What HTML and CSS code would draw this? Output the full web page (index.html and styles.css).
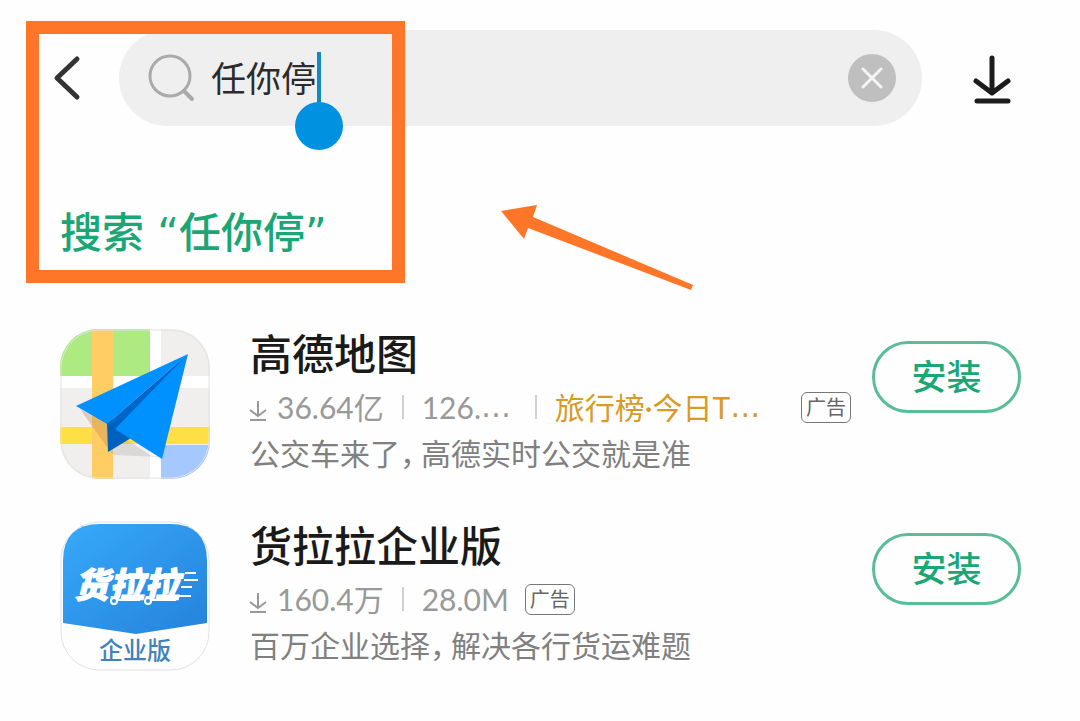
FILE: index.html
```
<!DOCTYPE html>
<html lang="zh-CN">

<head>
  <meta charset="UTF-8" />
  <meta name="viewport" content="width=device-width, initial-scale=1" />
  <title>任你停</title>
  <link rel="stylesheet" href="styles.css">
</head>

<body>
  <header class="top-bar">
    <button class="icon-btn" aria-label="返回">
      <svg width="28" height="46" viewBox="0 0 28 46">
        <path d="M24 4 L4 23 L24 42" fill="none" stroke="#333" stroke-width="5" stroke-linecap="round"
          stroke-linejoin="round" />
      </svg>
    </button>
    <form class="search-box">
      <svg class="search-icon" width="48" height="48" viewBox="0 0 48 48" fill="none" stroke="#aaa">
        <circle cx="23" cy="22" r="20" stroke-width="3" />
        <path d="M37 37 L45 45" stroke-width="4" stroke-linecap="round" />
      </svg>
      <div class="search-field">
        <input class="search-input" type="text" value="任你停" aria-label="搜索应用" />
        <span class="cursor"></span>
      </div>
      <button class="clear-btn" type="button" aria-label="清空">
        <svg width="48" height="48" viewBox="0 0 48 48">
          <circle cx="24" cy="24" r="24" fill="#bfbfbf" />
          <path d="M15 15 L33 33 M33 15 L15 33" stroke="#f5f5f5" stroke-width="3" stroke-linecap="round" />
        </svg>
      </button>
    </form>
    <button class="icon-btn" aria-label="下载管理">
      <svg width="40" height="56" viewBox="0 0 40 56" fill="none" stroke="#1c1c1c" stroke-width="5"
        stroke-linecap="round" stroke-linejoin="round">
        <path d="M20 8 V43 M4 31 L20 43 L36 31 M5 51 H36" />
      </svg>
    </button>
  </header>

  <main>
    <a class="suggestion" href="#">搜索 “任你停”</a>

    <ul class="app-list">
      <li class="app">
        <svg class="app-icon" viewBox="0 0 150 150">
          <defs>
            <clipPath id="map-clip">
              <rect width="150" height="150" rx="38" />
            </clipPath>
          </defs>
          <g clip-path="url(#map-clip)">
            <rect width="150" height="150" fill="#f0efed" />
            <rect width="90" height="48" fill="#aeea82" />
            <rect x="101" y="116" width="49" height="34" fill="#a5c8ff" />
            <rect x="90" width="11" height="150" fill="#fff" />
            <rect y="47" width="150" height="12" fill="#fff" />
            <rect y="98" width="150" height="17" fill="#ffdf45" />
            <rect x="32" width="21" height="150" fill="#ffcd64" />
            <path d="M20 80 L47 95 L49 121 Z" fill="#b98a50" opacity="0.35" />
            <path d="M49 122 L62 108 L90 126 L100 128 L54 126 Z" fill="#999" opacity="0.25" />
            <path d="M47 94 L48 123 L76 106 L90 70 Z" fill="#0060bd" />
            <path d="M128 25 L16 77 L47 95 Z" fill="#0091ff" />
            <path d="M128 25 L47 95 L48 98 L90 74 Z" fill="#0066ca" />
            <path d="M128 25 L55 100 L102 130 Z" fill="#0091ff" />
          </g>
          <rect class="icon-edge" x="1" y="1" width="148" height="148" rx="38" />
        </svg>
        <div class="app-info">
          <h2 class="app-name">高德地图</h2>
          <div class="app-meta">
            <svg class="down-icon" width="18" height="24" viewBox="0 0 18 24">
              <path d="M9 3 V18 M1 12 L9 18 L17 12 M1 22 H17" />
            </svg>
            <span class="downloads">36.64亿</span>
            <span class="size size-cut">126.<span class="dots">…</span></span>
            <span class="rank">旅行榜·今日T<span class="dots">…</span></span>
            <span class="ad">广告</span>
          </div>
          <p class="app-desc">公交车来了<span class="comma">，</span>高德实时公交就是准</p>
        </div>
        <button class="install-btn">安装</button>
      </li>

      <li class="app">
        <svg class="app-icon" viewBox="0 0 150 150">
          <defs>
            <linearGradient id="blue" x1="0" y1="0" x2="1" y2="1">
              <stop offset="0" stop-color="#36a9fb" />
              <stop offset="1" stop-color="#2582da" />
            </linearGradient>
          </defs>
          <rect class="icon-edge" x="1" y="1" width="148" height="148" rx="38" />
          <path d="M3 102 V40 Q3 3 40 3 H110 Q147 3 147 40 V102 L76 113 Z" fill="url(#blue)" />
          <text class="logo-text" x="14" y="77">货拉拉</text>
          <g fill="none" stroke="#fff" stroke-width="2">
            <path d="M58 79 H80 M92 79 H116 M125 52 H136 M124 59 H138 M121 66 H132 M119 75 H131" />
            <circle cx="54" cy="80" r="3" fill="#2c93ea" />
            <circle cx="88" cy="80" r="3" fill="#2c93ea" />
          </g>
          <text class="logo-sub" x="75" y="138">企业版</text>
        </svg>
        <div class="app-info">
          <h2 class="app-name">货拉拉企业版</h2>
          <div class="app-meta">
            <svg class="down-icon" width="18" height="24" viewBox="0 0 18 24">
              <path d="M9 3 V18 M1 12 L9 18 L17 12 M1 22 H17" />
            </svg>
            <span class="downloads">160.4万</span>
            <span class="size">28.0M</span>
            <span class="ad">广告</span>
          </div>
          <p class="app-desc">百万企业选择<span class="comma">，</span>解决各行货运难题</p>
        </div>
        <button class="install-btn">安装</button>
      </li>
    </ul>
  </main>

  <!-- marks drawn over the page -->
  <div class="mark-box"></div>
  <svg class="mark-arrow" width="194" height="86" viewBox="0 0 194 86">
    <path d="M1 6 L37 0 L33 12 L193 80 L191 85 L28 23 L24 34 Z" fill="#ff7629" />
  </svg>
</body>

</html>
```
FILE: styles.css
```
* {
  box-sizing: border-box;
}

body {
  position: relative;
  margin: 0;
  padding-top: 30px;
  background-color: #fefefe;
  color: #1a1a1a;
  font-family: Lato, "Noto Sans CJK SC", sans-serif;
}

button {
  padding: 0;
  border: none;
  background: none;
  font-family: inherit;
  cursor: pointer;
}

svg {
  display: block;
}

.top-bar {
  display: grid;
  grid-template-columns: 105px 1fr 140px;
  height: 96px;
  padding: 0 18px 0 14px;
}

.icon-btn {
  display: flex;
  align-items: center;
  justify-content: center;
}

.search-box {
  display: flex;
  align-items: center;
  padding: 0 26px 0 28px;
  border-radius: 48px;
  background-color: #efefef;
}

.search-field {
  position: relative;
  flex: 1;
  margin: 0 16px;
}

.search-input {
  display: block;
  width: 100%;
  height: 52px;
  padding: 0 0 4px;
  border: none;
  outline: none;
  background: none;
  color: #2b2b2b;
  font-family: inherit;
  font-size: 35px;
}

/* text cursor with the drag handle under it */
.cursor {
  position: absolute;
  top: 0;
  left: 106px;
  width: 4px;
  height: 52px;
  background-color: #1488c4;
}

.cursor::after {
  content: "";
  position: absolute;
  top: 50px;
  left: -22px;
  width: 48px;
  height: 48px;
  border-radius: 50%;
  background-color: #0091e0;
}

.suggestion {
  display: block;
  margin: 76px 60px 0;
  color: #1ba675;
  font-family: "DejaVu Sans", "Noto Sans CJK SC", sans-serif;
  font-size: 42px;
  font-weight: 500;
  line-height: 64px;
  text-decoration: none;
}

.app-list {
  display: flex;
  flex-direction: column;
  gap: 42px;
  margin: 0;
  padding: 63px 59px 50px 60px;
  list-style: none;
}

.app {
  display: flex;
  align-items: flex-start;
}

.app-icon {
  flex: none;
  width: 150px;
  height: 150px;
}

.icon-edge {
  fill: none;
  stroke: #e2e2e2;
  stroke-width: 1;
}

.logo-text {
  fill: #fff;
  stroke: #fff;
  stroke-width: 1;
  font-size: 35px;
  font-style: italic;
  font-weight: 900;
}

.logo-sub {
  fill: #3f83bd;
  font-size: 24px;
  font-weight: 500;
  text-anchor: middle;
}

.app-info {
  flex: 1;
  min-width: 0;
  height: 150px;
  margin: 0 21px 0 40px;
}

.app-name {
  margin: 0;
  font-size: 42px;
  font-weight: 500;
  line-height: 50px;
}

.app-meta {
  display: flex;
  align-items: center;
  height: 56px;
  color: #999;
  font-size: 30px;
  line-height: 56px;
  white-space: nowrap;
}

.down-icon {
  margin: 6px 10px 0 -1px;
  fill: none;
  stroke: #999;
  stroke-width: 2;
}

.size,
.rank {
  display: flex;
  align-items: center;
}

.size::before,
.rank::before {
  content: "";
  width: 2px;
  height: 24px;
  margin: 0 18px;
  background-color: #d0d0d0;
}

.size-cut {
  width: 133px;
}

.rank {
  flex: 1;
  color: #d99a26;
}

.dots {
  font-family: "DejaVu Sans", sans-serif;
}

.ad {
  width: 50px;
  height: 31px;
  margin-left: 16px;
  border: 1px solid #777;
  border-radius: 6px;
  color: #666;
  font-size: 20px;
  line-height: 28px;
  text-align: center;
}

.app-desc {
  margin: 0;
  color: #808080;
  font-size: 30px;
  line-height: 36px;
  white-space: nowrap;
}

.comma {
  margin-right: 6px;
  font-feature-settings: "halt";
}

.install-btn {
  flex: none;
  width: 149px;
  height: 72px;
  margin-top: 12px;
  padding-bottom: 5px;
  border: 3px solid #5bbd98;
  border-radius: 36px;
  color: #1ba675;
  font-size: 35px;
  font-weight: 500;
}

.mark-box {
  position: absolute;
  top: 21px;
  left: 26px;
  width: 379px;
  height: 262px;
  border: 13px solid #ff7629;
  pointer-events: none;
}

.mark-arrow {
  position: absolute;
  top: 205px;
  left: 500px;
  pointer-events: none;
}
```
